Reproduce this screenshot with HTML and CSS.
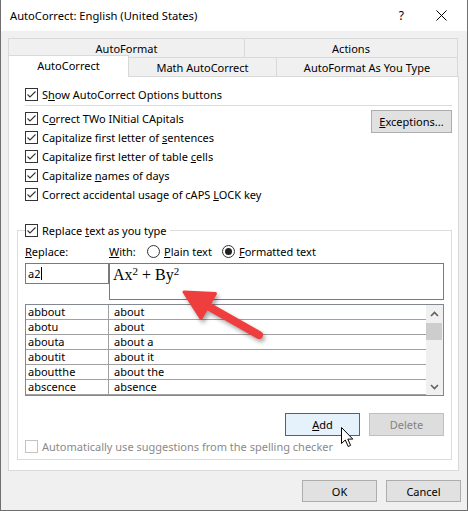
FILE: index.html
```html
<!DOCTYPE html>
<html>
<head>
<meta charset="utf-8">
<link rel="stylesheet" href="styles.css">
</head>
<body>
<div class="window">
  <div class="titlebar">
    <span class="title">AutoCorrect: English (United States)</span>
    <span class="help">?</span>
    <svg class="close" width="11" height="11" viewBox="0 0 11 11"><path d="M0.5 0.5 L10.5 10.5 M10.5 0.5 L0.5 10.5" stroke="#000" stroke-width="1"/></svg>
  </div>
  <div class="body">
    <div class="tabrow row1">
      <div class="tab t-af">AutoFormat</div>
      <div class="tab t-act">Actions</div>
    </div>
    <div class="tabrow row2">
      <div class="tab active t-ac">AutoCorrect</div>
      <div class="tab t-math">Math AutoCorrect</div>
      <div class="tab t-afayt">AutoFormat As You Type</div>
    </div>
    <div class="panel">
      <div class="check-row indent"><span class="cb"><svg viewBox="0 0 11 11"><polyline points="1.5,5.5 4,8 9.5,2.5"/></svg></span><span>S<u>h</u>ow AutoCorrect Options buttons</span></div>
      <div class="sep"></div>
      <div class="options">
        <div class="checks">
          <div class="check-row"><span class="cb"><svg viewBox="0 0 11 11"><polyline points="1.5,5.5 4,8 9.5,2.5"/></svg></span><span>C<u>o</u>rrect TWo INitial CApitals</span></div>
          <div class="check-row"><span class="cb"><svg viewBox="0 0 11 11"><polyline points="1.5,5.5 4,8 9.5,2.5"/></svg></span><span>Capitalize first letter of <u>s</u>entences</span></div>
          <div class="check-row"><span class="cb"><svg viewBox="0 0 11 11"><polyline points="1.5,5.5 4,8 9.5,2.5"/></svg></span><span>Capitalize first letter of table <u>c</u>ells</span></div>
          <div class="check-row"><span class="cb"><svg viewBox="0 0 11 11"><polyline points="1.5,5.5 4,8 9.5,2.5"/></svg></span><span>Capitalize <u>n</u>ames of days</span></div>
          <div class="check-row"><span class="cb"><svg viewBox="0 0 11 11"><polyline points="1.5,5.5 4,8 9.5,2.5"/></svg></span><span>Correct accidental usage of cAPS <u>L</u>OCK key</span></div>
        </div>
        <div class="btn exc"><u>E</u>xceptions...</div>
      </div>
      <div class="group">
        <div class="group-head"><span class="cb"><svg viewBox="0 0 11 11"><polyline points="1.5,5.5 4,8 9.5,2.5"/></svg></span><span>Replace <u>t</u>ext as you type</span></div>
        <div class="labels">
          <span class="lbl-replace"><u>R</u>eplace:</span>
          <span class="lbl-with"><u>W</u>ith:</span>
          <span class="radio-item plain"><span class="radio"></span><span><u>P</u>lain text</span></span>
          <span class="radio-item"><span class="radio on"></span><span><u>F</u>ormatted text</span></span>
        </div>
        <div class="inputs">
          <div class="input">a2<span class="caret"></span></div>
          <div class="withbox">Ax<sup>2</sup> + By<sup>2</sup></div>
        </div>
        <div class="list">
          <div class="rows">
            <div class="row"><span class="c1">abbout</span><span class="c2">about</span></div>
            <div class="row"><span class="c1">abotu</span><span class="c2">about</span></div>
            <div class="row"><span class="c1">abouta</span><span class="c2">about a</span></div>
            <div class="row"><span class="c1">aboutit</span><span class="c2">about it</span></div>
            <div class="row"><span class="c1">aboutthe</span><span class="c2">about the</span></div>
            <div class="row"><span class="c1">abscence</span><span class="c2">absence</span></div>
          </div>
          <div class="scrollbar">
            <div class="sb-btn"><svg width="9" height="6" viewBox="0 0 9 6"><polyline points="1,5 4.5,1.5 8,5"/></svg></div>
            <div class="thumb"></div>
            <div class="sb-track"></div>
            <div class="sb-btn"><svg width="9" height="6" viewBox="0 0 9 6"><polyline points="1,1 4.5,4.5 8,1"/></svg></div>
          </div>
        </div>
        <div class="actions">
          <div class="btn add"><u>A</u>dd</div>
          <div class="btn disabled">Delete</div>
        </div>
        <div class="check-row disabled-row"><span class="cb off"></span><span>Automatically use suggestions from the spelling checker</span></div>
      </div>
    </div>
  </div>
  <div class="footer">
    <div class="btn">OK</div>
    <div class="btn">Cancel</div>
  </div>
  <svg class="annot" width="468" height="511" viewBox="0 0 468 511">
    <g class="red-arrow">
      <line x1="259" y1="335" x2="206" y2="305" stroke="#ef3e3e" stroke-width="8" stroke-linecap="round"/>
      <polygon points="184,292 215.5,293.5 201,318.5" fill="#ef3e3e" stroke="#ef3e3e" stroke-width="3" stroke-linejoin="round"/>
    </g>
    <path d="M341.5 427.5 L341.5 443.5 L345.3 440 L348.2 446.5 L350.6 445.4 L347.8 439.1 L352.8 439.1 Z" fill="#fff" stroke="#000" stroke-width="1" stroke-linejoin="miter"/>
  </svg>
</div>
</body>
</html>
```

FILE: styles.css
```css
body {
  margin: 0;
  font-family: "Noto Sans", "Open Sans", sans-serif;
  font-size: 11px;
  color: #000;
  background: #fff;
}

u {
  text-decoration: underline;
  text-underline-offset: 1px;
}

.window {
  position: relative;
  width: 468px;
  height: 511px;
  box-sizing: border-box;
  border: 1px solid #6f6f6f;
  border-top: none;
  background: #f0f0f0;
  display: flex;
  flex-direction: column;
  overflow: hidden;
}

.titlebar {
  height: 31px;
  flex: none;
  background: #fff;
  display: flex;
  align-items: center;
  padding-left: 9px;
}

.title {
  font-size: 11.2px;
}

.help {
  margin-left: auto;
  margin-right: 32px;
  font-size: 12px;
}

.close {
  margin-right: 20px;
}

.body {
  padding: 7px 7px 0 7px;
  display: flex;
  flex-direction: column;
}

.tabrow {
  display: flex;
  height: 19px;
}

.row2 {
  align-items: flex-end;
}

.tab {
  box-sizing: border-box;
  height: 19px;
  border: 1px solid #d9d9d9;
  border-bottom: none;
  background: #f0f0f0;
  display: flex;
  align-items: center;
  justify-content: center;
  line-height: 1;
}

.tab + .tab {
  margin-left: -1px;
}

.t-af { width: 237px; }
.t-act { width: 214px; }
.t-ac { width: 121px; }
.t-math { width: 149px; }
.t-afayt { width: 182px; }

.tab.active {
  position: relative;
  z-index: 1;
  height: 22px;
  margin-bottom: -1px;
  background: #fff;
  padding-bottom: 2px;
}

.panel {
  box-sizing: border-box;
  height: 395px;
  width: 451px;
  background: #fff;
  border: 1px solid #d9d9d9;
  padding: 8px 6px 0 8px;
  display: flex;
  flex-direction: column;
}

.check-row {
  display: flex;
  align-items: center;
  height: 19px;
  gap: 4px;
  white-space: nowrap;
}

.indent {
  margin-left: 8px;
}

.cb {
  flex: none;
  width: 13px;
  height: 13px;
  box-sizing: border-box;
  border: 1px solid #333;
  background: #fff;
  display: flex;
}

.cb svg {
  width: 11px;
  height: 11px;
}

.cb polyline {
  fill: none;
  stroke: #333;
  stroke-width: 1.1;
}

.cb.off {
  border-color: #c4c4c4;
}

.sep {
  margin: 1px 0 0 8px;
  height: 1px;
  background: #dcdcdc;
}

.options {
  margin: 3px 0 0 8px;
  display: flex;
  justify-content: space-between;
  align-items: flex-start;
}

.btn {
  box-sizing: border-box;
  width: 75px;
  height: 22px;
  border: 1px solid #adadad;
  background: #e1e1e1;
  display: flex;
  align-items: center;
  justify-content: center;
  white-space: nowrap;
}

.btn.exc {
  width: 81px;
  height: 23px;
  margin-top: 1px;
}

.btn.add {
  height: 23px;
  background: #e5f1fb;
  border-color: #0078d7;
}

.btn.disabled {
  height: 23px;
  background: #dddddd;
  border-color: #bfbfbf;
  color: #838383;
}

.group {
  margin-top: 26px;
  border: 1px solid #dcdcdc;
  padding: 0 7px 3px 7px;
  display: flex;
  flex-direction: column;
}

.group-head {
  align-self: flex-start;
  margin-top: -7px;
  height: 13px;
  display: flex;
  align-items: center;
  gap: 4px;
  padding-right: 3px;
  background: #fff;
  white-space: nowrap;
}

.labels {
  margin-top: 5px;
  height: 18px;
  display: flex;
  align-items: center;
  white-space: nowrap;
}

.lbl-replace { width: 84px; }
.lbl-with { width: 38px; }

.radio-item {
  display: flex;
  align-items: center;
  gap: 4px;
}

.radio-item.plain { width: 75px; }

.radio {
  width: 13px;
  height: 13px;
  box-sizing: border-box;
  border: 1px solid #333;
  border-radius: 50%;
  background: #fff;
  display: flex;
  align-items: center;
  justify-content: center;
}

.radio.on::after {
  content: "";
  width: 7px;
  height: 7px;
  border-radius: 50%;
  background: #222;
}

.inputs {
  margin-top: 3px;
  display: flex;
  align-items: flex-start;
}

.input {
  box-sizing: border-box;
  width: 84px;
  height: 21px;
  border: 1px solid #7a7a7a;
  padding-left: 2px;
  display: flex;
  align-items: center;
}

.caret {
  width: 1px;
  height: 13px;
  background: #000;
  margin-left: 1px;
}

.withbox {
  box-sizing: border-box;
  width: 335px;
  height: 37px;
  border: 1px solid #7a7a7a;
  padding: 0 0 0 3px;
  font-family: "Liberation Serif", "Times New Roman", serif;
  font-size: 16px;
  line-height: 22px;
}

.withbox sup {
  font-size: 11px;
  vertical-align: 5px;
  line-height: 0;
}

.list {
  margin-top: 4px;
  height: 92px;
  box-sizing: border-box;
  border: 1px solid #828790;
  display: flex;
}

.rows {
  flex: 1;
  display: flex;
  flex-direction: column;
}

.row {
  height: 15px;
  box-sizing: border-box;
  border-bottom: 1px solid #a0a0a0;
  display: flex;
  align-items: center;
  line-height: 14px;
}

.c1 {
  width: 83px;
  box-sizing: border-box;
  height: 14px;
  border-right: 1px solid #a0a0a0;
  padding-left: 2px;
}

.c2 {
  padding-left: 5px;
}

.scrollbar {
  width: 17px;
  background: #f0f0f0;
  display: flex;
  flex-direction: column;
}

.sb-btn {
  height: 17px;
  display: flex;
  align-items: center;
  justify-content: center;
}

.sb-btn polyline {
  fill: none;
  stroke: #606060;
  stroke-width: 1.6;
}

.thumb {
  height: 17px;
  margin: 1px 1px 0 0;
  background: #cdcdcd;
}

.sb-track {
  flex: 1;
}

.actions {
  margin-top: 17px;
  display: flex;
  justify-content: flex-end;
  gap: 9px;
}

.disabled-row {
  margin-top: 1px;
  color: #8a8a8a;
}

.footer {
  padding: 9px 6px 0 0;
  display: flex;
  justify-content: flex-end;
  gap: 9px;
}

.annot {
  position: absolute;
  top: 0;
  left: -1px;
  pointer-events: none;
}

.red-arrow {
  filter: drop-shadow(2px 3px 2px rgba(0, 0, 0, 0.35));
}
```
